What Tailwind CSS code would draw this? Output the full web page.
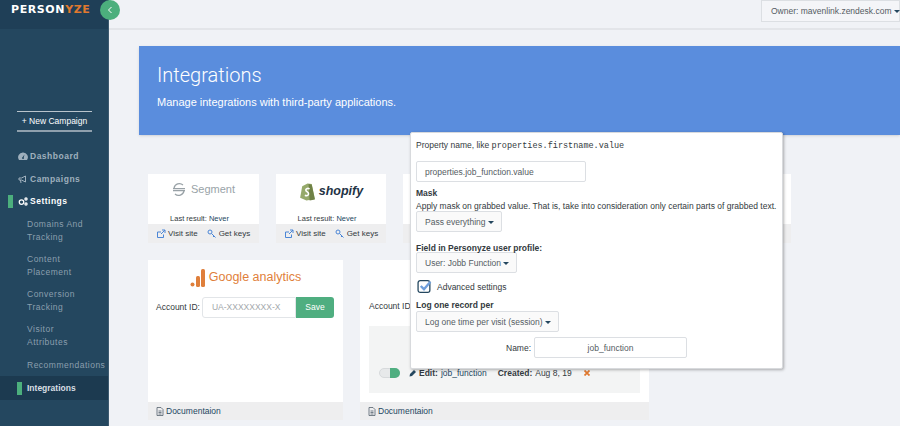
<!DOCTYPE html>
<html>
  <head>
    <meta charset="utf-8">
    <meta name="viewport" content="width=device-width, initial-scale=1">
    <script src="https://cdn.jsdelivr.net/npm/@tailwindcss/browser@4"></script>
    <title>Integrations</title>
  </head>
  <body class="relative w-[900px] h-[426px] overflow-hidden bg-[#f0f2f6] font-['Liberation_Sans',sans-serif] text-[#333a40]">
    <div class="flex h-[426px]">
      <!-- sidebar -->
      <aside class="w-[109px] shrink-0 bg-[#24475f] flex flex-col border-r border-[#3d5a70]">
        <div class="h-[29px] bg-[#1f3f57] pl-[11px] pt-[2px] font-['DejaVu_Sans',sans-serif] font-bold text-[11px] leading-[16px] tracking-[0.6px] text-white">PERSON<span class="text-[#e0792f]">YZE</span></div>
        <div class="mt-[82px] mx-[17px] h-[21px] w-[75px] pt-[1px] border-t border-[#b9c4cc] border-b-2 border-b-[#8fa0ad] flex items-center justify-center text-[8.500px] text-white">+ New Campaign</div>
        <nav class="mt-[18px] text-[8.500px] tracking-[0.5px]">
          <div class="h-[13px] pl-[18px] flex items-center gap-[2px] font-bold text-[#9fb0bd]">
            <svg class="w-[10px] h-[9px]" viewBox="0 0 20 18" fill="#9fb0bd"><path d="M10 1a9.500 9.500 0 0 0-8 15h16a9.500 9.500 0 0 0-8-15zm0 13a2 2 0 0 1-1-3.700L13 5l-1.500 6A2 2 0 0 1 10 14z"/></svg>Dashboard</div>
          <div class="mt-[10px] h-[13px] pl-[18px] flex items-center gap-[2px] font-bold text-[#9fb0bd]">
            <svg class="w-[10px] h-[9px]" viewBox="0 0 20 18" fill="none" stroke="#9fb0bd" stroke-width="2"><path d="M2 6v4h5l8 4V2L7 6H2z"/><path d="M5 10l1 6"/></svg>Campaigns</div>
          <div class="mt-[9px] h-[13px] pl-[8px] flex items-center font-bold text-white">
            <span class="w-[5px] h-[13px] bg-[#4caf7d] mr-[5px]"></span>
            <svg class="w-[10px] h-[9px] mr-[2px]" viewBox="0 0 20 18" fill="none" stroke="#fff" stroke-width="2.500"><circle cx="7" cy="10" r="4.500"/><circle cx="16" cy="4" r="2.200"/><circle cx="16" cy="14" r="2.200"/></svg>Settings</div>
          <div class="pl-[27px] text-[#8b9fae] leading-[13px]">
            <div class="mt-[10px]">Domains And<br>Tracking</div>
            <div class="mt-[9px]">Content<br>Placement</div>
            <div class="mt-[9px]">Conversion<br>Tracking</div>
            <div class="mt-[9px]">Visitor<br>Attributes</div>
            <div class="mt-[10px] whitespace-nowrap">Recommendations</div>
          </div>
          <div class="mt-[4px] h-[24px] bg-[#1c3a50] pl-[17px] flex items-center font-bold text-[#d8dfe4] tracking-normal">
            <span class="w-[5px] h-[13px] bg-[#4caf7d] mr-[5px]"></span>Integrations</div>
        </nav>
      </aside>

      <!-- main -->
      <main class="flex-1 min-w-0">
        <header class="h-[30px] border-b-2 border-[#e3e5e9] flex justify-end">
          <button class="h-[22px] w-[139px] bg-[#f4f5f8] border border-[#dcdfe3] text-[8.500px] text-[#555c63] whitespace-nowrap pl-[9px] text-left">Owner: mavenlink.zendesk.com <span class="inline-block align-middle border-x-[3px] border-x-transparent border-t-[3px] border-t-[#24475f]"></span></button>
        </header>

        <section class="mt-[16px] ml-[30px] h-[89px] bg-[#5a8ddd] shadow-sm pl-[18px] pt-[17px] text-white">
          <h1 class="font-['Roboto',sans-serif] font-light text-[20px] leading-[24px]">Integrations</h1>
          <p class="mt-[9px] text-[11px] leading-[13px]">Manage integrations with third-party applications.</p>
        </section>

        <div class="mt-[39px] ml-[39px] flex gap-[17px] items-start">
          <div class="w-[111px] h-[69px] bg-white flex flex-col text-[8px]">
            <div class="flex-1 flex flex-col items-center">
              <div class="h-[29px] flex items-center gap-[5px] pt-[1px] text-[#99a3a8] text-[11px]">
                <svg class="w-[14px] h-[15px]" viewBox="0 0 28 30" fill="none" stroke="#98a1a6" stroke-width="2.500"><path d="M4 12a11 11 0 0 1 18-6"/><path d="M24 18a11 11 0 0 1-18 6"/><path d="M2 13h24M2 17h24"/></svg>Segment</div>
              <div class="mt-[11px] pr-[8px] text-[7.500px] leading-[10px] whitespace-nowrap">Last result: <span class="text-[#24475f]">Never</span></div>
            </div>
            <div class="h-[19px] bg-[#eeeeef] flex items-center pl-[8px] gap-[9px] whitespace-nowrap">
              <span class="flex items-center gap-[2px]"><svg class="w-[10px] h-[10px]" viewBox="0 0 20 20" fill="none" stroke="#4b86d6" stroke-width="2"><path d="M15 11v6H3V6h7M10 10l8-8M12 2h6v6"/></svg>Visit site</span>
              <span class="flex items-center gap-[2px]"><svg class="w-[10px] h-[10px]" viewBox="0 0 20 20" fill="none" stroke="#4b86d6" stroke-width="2"><circle cx="6" cy="6" r="4"/><path d="M9 9l8 8M14 14l-2 2"/></svg>Get keys</span>
            </div>
          </div>
          <div class="w-[110px] h-[69px] bg-white flex flex-col text-[8px]">
            <div class="flex-1 flex flex-col items-center">
              <div class="h-[29px] flex items-center gap-[3px] pt-[6px]">
                <svg class="w-[17px] h-[19px]" viewBox="0 0 16 18"><path d="M1 15L3 4l5-2.500 4 .5 3 14-8 1.500z" fill="#95a96a"/><path d="M9 2l3 .5 3 14-5 1z" fill="#6f8146"/><path d="M10 6.500c-2-1-4 0-3.500 1.500s3 1.500 2.500 3.500-2.500 1.500-3.500 1" fill="none" stroke="#fff" stroke-width="1.500"/></svg>
                <span class="font-bold italic text-[12.500px] text-[#1f3345]">shopify</span>
              </div>
              <div class="mt-[11px] pr-[8px] text-[7.500px] leading-[10px] whitespace-nowrap">Last result: <span class="text-[#24475f]">Never</span></div>
            </div>
            <div class="h-[19px] bg-[#eeeeef] flex items-center pl-[8px] gap-[9px] whitespace-nowrap">
              <span class="flex items-center gap-[2px]"><svg class="w-[10px] h-[10px]" viewBox="0 0 20 20" fill="none" stroke="#4b86d6" stroke-width="2"><path d="M15 11v6H3V6h7M10 10l8-8M12 2h6v6"/></svg>Visit site</span>
              <span class="flex items-center gap-[2px]"><svg class="w-[10px] h-[10px]" viewBox="0 0 20 20" fill="none" stroke="#4b86d6" stroke-width="2"><circle cx="6" cy="6" r="4"/><path d="M9 9l8 8M14 14l-2 2"/></svg>Get keys</span>
            </div>
          </div>
          <div class="w-[388px] h-[69px] flex flex-col">
            <div class="flex-1 bg-white"></div>
            <div class="h-[19px] bg-[#eeeeef]"></div>
          </div>
        </div>

        <div class="mt-[17px] ml-[39px] flex gap-[17px] items-start">
          <div class="w-[195px] h-[160px] bg-white flex flex-col">
            <div class="flex-1">
              <div class="h-[27px] pt-[8px] flex justify-center items-end gap-[3px] text-[12.500px] leading-[15px] text-[#df7f3b]">
                <svg class="w-[16px] h-[18px]" viewBox="0 0 16 18" fill="#df7f3b"><circle cx="2.500" cy="15.500" r="2"/><rect x="6" y="7" width="4" height="11" rx="1.500"/><rect x="11" y="0" width="4" height="18" rx="1.500"/></svg>
                <span class="mb-[2px]">Google analytics</span>
              </div>
              <div class="mt-[10px] pl-[8px] flex items-center text-[8.500px]">
                <span class="mr-[2px] whitespace-nowrap">Account ID:</span>
                <div class="w-[94px] h-[21px] border border-[#e2e5e8] rounded-l-[3px] pl-[9px] flex items-center text-[#a3a8ac] whitespace-nowrap">UA-XXXXXXXX-X</div>
                <div class="w-[38px] h-[21px] bg-[#4fae80] rounded-r-[3px] text-white flex items-center justify-center">Save</div>
              </div>
            </div>
            <div class="h-[18px] bg-[#eeeeef] pl-[8px] flex items-center gap-[2px] text-[8.500px] text-[#24475f]">
              <svg class="w-[8px] h-[9px]" viewBox="0 0 16 18" fill="none" stroke="#4c5a66" stroke-width="1.500"><path d="M2 1h8l4 4v12H2zM5 8h6M5 11h6M5 14h6"/></svg>Documentaion</div>
          </div>

          <div class="w-[289px] h-[160px] bg-white flex flex-col">
            <div class="flex-1 px-[9px]">
              <div class="pt-[40px] text-[8.500px] leading-[13px] whitespace-nowrap">Account ID:</div>
              <div class="mt-[13px] h-[67px] bg-[#f3f4f4] pl-[10px] pt-[41px] flex items-start text-[8.500px] whitespace-nowrap">
                <span class="w-[21px] h-[10px] rounded-full bg-[#e7e9ea] mt-[1px] mr-[9px] flex justify-end border border-[#d7dadc]"><span class="w-[10px] bg-[#4fae80] rounded-r-full -my-px -mr-px"></span></span>
                <svg class="w-[8px] h-[8px] mt-[2px] mr-[2px]" viewBox="0 0 16 16" fill="#24475f"><path d="M1 15l1-5 8-8 4 4-8 8z"/></svg>
                <b class="leading-[12px]">Edit:</b><span class="ml-[3px] leading-[12px] text-[#24475f]">job_function</span>
                <b class="ml-[11px] leading-[12px]">Created:</b><span class="ml-[3px] leading-[12px]">Aug 8, 19</span>
                <svg class="w-[6px] h-[6px] ml-[12px] mt-[3px]" viewBox="0 0 12 12" stroke="#e0792f" stroke-width="3.500"><path d="M1 1l10 10M11 1L1 11"/></svg>
              </div>
            </div>
            <div class="h-[18px] bg-[#eeeeef] pl-[8px] flex items-center gap-[2px] text-[8.500px] text-[#24475f]">
              <svg class="w-[8px] h-[9px]" viewBox="0 0 16 18" fill="none" stroke="#4c5a66" stroke-width="1.500"><path d="M2 1h8l4 4v12H2zM5 8h6M5 11h6M5 14h6"/></svg>Documentaion</div>
          </div>
        </div>
      </main>
    </div>

    <!-- sidebar toggle -->
    <div class="absolute left-[100px] top-[0px] w-[20px] h-[20px] rounded-full bg-[#4caf7d] flex items-center justify-center">
      <svg class="w-[8px] h-[8px]" viewBox="0 0 8 8" fill="none" stroke="#fff" stroke-width="1"><path d="M5.500 1L2.500 4l3 3"/></svg>
    </div>

    <!-- popover -->
    <div class="absolute left-[410px] top-[132px] w-[373px] h-[237px] bg-white rounded-[2px] border border-[#d8dadd] shadow-[1px_1px_3px_rgba(0,0,0,0.3)] pl-[5px] pt-[6px] text-[8.500px] leading-[12px] text-[#333a40]">
      <div class="whitespace-nowrap">Property name, like <span class="font-['Liberation_Mono',monospace]">properties.firstname.value</span></div>
      <div class="mt-[9px] w-[170px] h-[21px] border border-[#dcdfe3] rounded-[2px] pl-[8px] flex items-center text-[#555c63]">properties.job_function.value</div>
      <div class="mt-[5px] font-bold">Mask</div>
      <div class="mt-[1px] whitespace-nowrap">Apply mask on grabbed value. That is, take into consideration only certain parts of grabbed text.</div>
      <button class="-mt-[1px] block w-[86px] h-[21px] border border-[#dcdfe3] rounded-[2px] bg-[#fafafa] pl-[8px] text-left text-[#555c63]">Pass everything <span class="inline-block align-middle border-x-[3px] border-x-transparent border-t-[3px] border-t-[#24475f]"></span></button>
      <div class="mt-[10px] font-bold whitespace-nowrap">Field in Personyze user profile:</div>
      <button class="-mt-[2px] block w-[101px] h-[21px] border border-[#dcdfe3] rounded-[2px] bg-[#fafafa] pl-[8px] text-left text-[#555c63]">User: Jobb Function <span class="inline-block align-middle border-x-[3px] border-x-transparent border-t-[3px] border-t-[#24475f]"></span></button>
      <div class="mt-[6px] ml-[1px] h-[15px] flex items-center gap-[5px]">
        <svg class="w-[15px] h-[15px]" viewBox="0 0 14 14" fill="none"><rect x="1" y="1.500" width="11" height="11" rx="2" stroke="#24475f" stroke-width="1.200"/><path d="M3.500 6.500l3 3 6-7" stroke="#6f9fdc" stroke-width="2.200"/></svg>
        <span>Advanced settings</span>
      </div>
      <div class="mt-[5px] font-bold">Log one record per</div>
      <button class="mt-[0px] block w-[143px] h-[21px] border border-[#dcdfe3] rounded-[2px] bg-[#fafafa] pl-[8px] text-left text-[#555c63] whitespace-nowrap">Log one time per visit (session) <span class="inline-block align-middle border-x-[3px] border-x-transparent border-t-[3px] border-t-[#24475f]"></span></button>
      <div class="mt-[5px] flex items-center justify-start">
        <span class="ml-[90px] w-[27px] whitespace-nowrap">Name:</span>
        <div class="ml-[1px] w-[153px] h-[21px] border border-[#dcdfe3] rounded-[2px] flex items-center justify-center text-[#555c63]">job_function</div>
      </div>
    </div>
  </body>
</html>
